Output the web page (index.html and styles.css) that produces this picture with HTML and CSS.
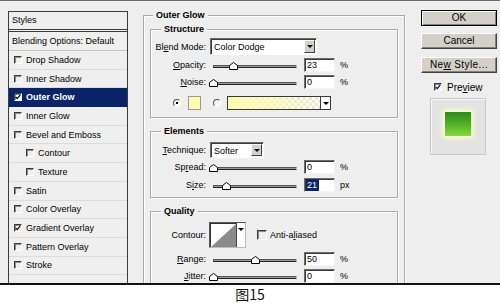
FILE: index.html
```html
<!DOCTYPE html>
<html>
<head>
<meta charset="utf-8">
<link rel="stylesheet" href="styles.css">
</head>
<body>
<div class="dialog">
  <div class="styles-panel">
    <div class="sp-head">Styles</div>
    <div class="sp-blend">Blending Options: Default</div>
    <ul class="sp-list">
      <li class="sp-item"><span class="cb"></span>Drop Shadow</li>
      <li class="sp-item"><span class="cb"></span>Inner Shadow</li>
      <li class="sp-item active"><span class="cb checked"><svg viewBox="0 0 8 8" width="6" height="6"><polyline points="1,4 3,6.2 7,1.2" fill="none" stroke="#000" stroke-width="1.6"/></svg></span>Outer Glow</li>
      <li class="sp-item"><span class="cb"></span>Inner Glow</li>
      <li class="sp-item"><span class="cb"></span>Bevel and Emboss</li>
      <li class="sp-item sub"><span class="cb"></span>Contour</li>
      <li class="sp-item sub"><span class="cb"></span>Texture</li>
      <li class="sp-item"><span class="cb"></span>Satin</li>
      <li class="sp-item"><span class="cb"></span>Color Overlay</li>
      <li class="sp-item"><span class="cb checked-plain"><svg viewBox="0 0 8 8" width="6" height="6"><polyline points="1,4 3,6.2 7,1.2" fill="none" stroke="#000" stroke-width="1.4"/></svg></span>Gradient Overlay</li>
      <li class="sp-item"><span class="cb"></span>Pattern Overlay</li>
      <li class="sp-item"><span class="cb"></span>Stroke</li>
    </ul>
  </div>

  <div class="group outer">
    <div class="group-title">Outer Glow</div>

    <div class="group structure">
      <div class="group-title">Structure</div>
      <div class="row row-blend">
        <span class="lbl">Bl<u>e</u>nd Mode:</span>
        <div class="select blend-select"><span class="sel-text">Color Dodge</span><span class="drop"><span class="tri"></span></span></div>
      </div>
      <div class="row row-opacity">
        <span class="lbl"><u>O</u>pacity:</span>
        <div class="slider"><div class="track"></div><span class="thumb" style="left:20px"><svg viewBox="0 0 9 8" width="9" height="8"><polygon points="0.5,7.5 0.5,3.5 4.5,0.5 8.5,3.5 8.5,7.5" fill="#fff" stroke="#000"/></svg></span></div>
        <div class="num">23</div><span class="unit">%</span>
      </div>
      <div class="row row-noise">
        <span class="lbl"><u>N</u>oise:</span>
        <div class="slider"><div class="track"></div><span class="thumb" style="left:0px"><svg viewBox="0 0 9 8" width="9" height="8"><polygon points="0.5,7.5 0.5,3.5 4.5,0.5 8.5,3.5 8.5,7.5" fill="#fff" stroke="#000"/></svg></span></div>
        <div class="num">0</div><span class="unit">%</span>
      </div>
      <div class="row row-color">
        <span class="radio on"></span>
        <span class="swatch"></span>
        <span class="radio radio2"></span>
        <div class="gradient"><span class="drop"><span class="tri"></span></span></div>
      </div>
    </div>

    <div class="group elements">
      <div class="group-title">Elements</div>
      <div class="row">
        <span class="lbl"><u>T</u>echnique:</span>
        <div class="select tech-select"><span class="sel-text">Softer</span><span class="drop"><span class="tri"></span></span></div>
      </div>
      <div class="row row-spread">
        <span class="lbl">Sp<u>r</u>ead:</span>
        <div class="slider"><div class="track"></div><span class="thumb" style="left:0px"><svg viewBox="0 0 9 8" width="9" height="8"><polygon points="0.5,7.5 0.5,3.5 4.5,0.5 8.5,3.5 8.5,7.5" fill="#fff" stroke="#000"/></svg></span></div>
        <div class="num">0</div><span class="unit">%</span>
      </div>
      <div class="row row-size">
        <span class="lbl">S<u>i</u>ze:</span>
        <div class="slider"><div class="track"></div><span class="thumb" style="left:13px"><svg viewBox="0 0 9 8" width="9" height="8"><polygon points="0.5,7.5 0.5,3.5 4.5,0.5 8.5,3.5 8.5,7.5" fill="#fff" stroke="#000"/></svg></span></div>
        <div class="num"><span class="sel">21</span></div><span class="unit">px</span>
      </div>
    </div>

    <div class="group quality">
      <div class="group-title">Quality</div>
      <div class="row row-contour">
        <span class="lbl">Contour:</span>
        <div class="contour">
          <svg class="curve" viewBox="0 0 24 24" width="24" height="24" preserveAspectRatio="none"><polygon points="0,24 24,0 24,24" fill="#8a8a8a"/></svg>
          <span class="cdrop"><span class="tri"></span></span>
        </div>
        <span class="cb aa"></span><span class="aa-text">Anti-a<u>l</u>iased</span>
      </div>
      <div class="row row-range">
        <span class="lbl"><u>R</u>ange:</span>
        <div class="slider"><div class="track"></div><span class="thumb" style="left:42px"><svg viewBox="0 0 9 8" width="9" height="8"><polygon points="0.5,7.5 0.5,3.5 4.5,0.5 8.5,3.5 8.5,7.5" fill="#fff" stroke="#000"/></svg></span></div>
        <div class="num">50</div><span class="unit">%</span>
      </div>
      <div class="row row-jitter">
        <span class="lbl"><u>J</u>itter:</span>
        <div class="slider"><div class="track"></div><span class="thumb" style="left:0px"><svg viewBox="0 0 9 8" width="9" height="8"><polygon points="0.5,7.5 0.5,3.5 4.5,0.5 8.5,3.5 8.5,7.5" fill="#fff" stroke="#000"/></svg></span></div>
        <div class="num">0</div><span class="unit">%</span>
      </div>
    </div>
  </div>

  <div class="actions">
    <div class="btn default">OK</div>
    <div class="btn cancel">Cancel</div>
    <div class="btn newstyle">Ne<u>w</u> Style...</div>
    <div class="preview-check"><span class="cb checked-plain"><svg viewBox="0 0 8 8" width="6" height="6"><polyline points="1,4 3,6.2 7,1.2" fill="none" stroke="#000" stroke-width="1.4"/></svg></span><span>Pre<u>v</u>iew</span></div>
    <div class="preview-box"><div class="glow-square"></div></div>
  </div>
</div>
<div class="caption">图15</div>
</body>
</html>
```
FILE: styles.css
```css
* { box-sizing: border-box; }

body {
  margin: 0;
  width: 500px;
  height: 303px;
  overflow: hidden;
  background: #fff;
  font-family: "Liberation Sans", Arial, sans-serif;
  font-size: 9px;
  color: #000;
}

u { text-decoration: underline; text-underline-offset: 1px; }

.dialog {
  display: flex;
  height: 285px;
  border-top: 1px solid #6a6a6a;
  border-bottom: 2px solid #111;
  background: #eeeeee;
  overflow: hidden;
}

/* ---- left styles list ---- */
.styles-panel {
  flex: none;
  width: 120px;
  margin: 10px 0 0 8px;
  border: 1px solid #3c3c3c;
  border-bottom: 0;
  background: #efefef;
}
.sp-head {
  height: 18px;
  line-height: 17px;
  padding-left: 3px;
  border-bottom: 1px solid #3c3c3c;
}
.sp-blend {
  margin-top: 1px;
  height: 20px;
  line-height: 18px;
  padding-left: 3px;
  border-top: 1px solid #3c3c3c;
  border-bottom: 1px solid #c4c4c4;
}
.sp-list { list-style: none; margin: 0; padding: 0; }
.sp-item {
  height: 18.7px;
  display: flex;
  align-items: center;
  gap: 4px;
  padding-left: 5px;
  border-bottom: 1px solid #dcdcdc;
  white-space: nowrap;
}
.sp-item.sub { padding-left: 17px; }
.sp-item.active {
  background: #0a246a;
  color: #fff;
  font-weight: bold;
  border-bottom-color: #0a246a;
}

.cb {
  flex: none;
  width: 8px;
  height: 8px;
  display: inline-flex;
  align-items: center;
  justify-content: center;
  border-top: 1px solid #3a3a3a;
  border-left: 1px solid #3a3a3a;
  border-right: 1px solid #fff;
  border-bottom: 1px solid #fff;
  box-shadow: inset 1px 1px 0 #8a8a8a;
}
.cb.checked { background: #fff; }
.cb.checked-plain { background: #f4f4f4; }

/* ---- middle groups ---- */
.group {
  position: relative;
  border: 1px solid #a9a9a9;
  box-shadow: inset 1px 1px 0 #fff, 1px 1px 0 #fff;
}
.group-title {
  position: absolute;
  top: -7px;
  left: 9px;
  padding: 0 3px;
  line-height: 12px;
  font-weight: bold;
  background: #eeeeee;
  white-space: nowrap;
}
.outer {
  flex: none;
  width: 262px;
  margin: 14px 0 0 15px;
  padding: 13px 6px 0;
  border-bottom: 0;
}
.structure .group-title,
.elements .group-title,
.quality .group-title { left: 10px; }

.structure { height: 89px; padding-top: 8px; }
.elements { height: 67px; margin-top: 13px; padding-top: 10px; }
.quality { height: 100px; margin-top: 13px; padding-top: 10px; }

.row {
  display: flex;
  align-items: center;
  height: 16px;
  white-space: nowrap;
}
.lbl {
  flex: none;
  width: 55px;
  text-align: right;
}
.row-blend { height: 17px; }
.row-opacity { margin-top: 2px; }
.row-noise { margin-top: 1px; }
.row-color { margin-top: 6px; height: 14px; }
.row-spread { margin-top: 1px; }
.row-size { margin-top: 2px; }
.row-contour { height: 26px; }
.row-range { margin-top: 3px; }
.row-jitter { margin-top: 1px; }

.select {
  flex: none;
  display: flex;
  align-items: stretch;
  margin-left: 4px;
  background: #fff;
  border-top: 1px solid #6b6b6b;
  border-left: 1px solid #6b6b6b;
  border-right: 1px solid #fff;
  border-bottom: 1px solid #fff;
  box-shadow: inset 1px 1px 0 #3a3a3a;
}
.blend-select { width: 107px; height: 17px; }
.tech-select { width: 54px; height: 16px; }
.sel-text {
  flex: 1;
  padding: 2px 0 0 3px;
  line-height: 12px;
}
.drop {
  flex: none;
  width: 11px;
  margin: 1px 1px 1px 0;
  display: flex;
  justify-content: center;
  align-items: center;
  background: #d4d0c8;
  border-top: 1px solid #fff;
  border-left: 1px solid #fff;
  border-right: 1px solid #404040;
  border-bottom: 1px solid #404040;
}
.tri {
  width: 0;
  height: 0;
  border-left: 3px solid transparent;
  border-right: 3px solid transparent;
  border-top: 3px solid #000;
}

.slider {
  position: relative;
  flex: none;
  width: 91px;
  height: 16px;
  margin-left: 3px;
  padding: 0 3px 0 4px;
}
.track {
  margin-top: 8px;
  height: 3px;
  border-top: 1px solid #555;
  border-bottom: 1px solid #222;
  border-left: 1px solid #555;
  border-right: 1px solid #ddd;
  background: #9a9a9a;
}
.thumb {
  position: absolute;
  top: 5px;
  width: 9px;
  height: 8px;
  display: block;
}
.thumb svg { display: block; }

.num {
  flex: none;
  width: 31px;
  height: 14px;
  margin-left: 4px;
  padding-left: 2px;
  line-height: 12px;
  background: #fff;
  border-top: 1px solid #6b6b6b;
  border-left: 1px solid #6b6b6b;
  border-right: 1px solid #f4f4f4;
  border-bottom: 1px solid #f4f4f4;
  box-shadow: inset 1px 1px 0 #3a3a3a;
}
.num .sel {
  display: inline-block;
  padding: 0 2px 0 1px;
  margin-left: -1px;
  background: #0a246a;
  color: #fff;
}
.unit { margin-left: 5px; }

.radio {
  flex: none;
  width: 8px;
  height: 8px;
  margin-left: 22px;
  border-radius: 50%;
  border: 1px solid;
  border-color: #555 #fff #fff #555;
  background: #f6f6f6;
  position: relative;
}
.radio.on::after {
  content: "";
  position: absolute;
  left: 2px;
  top: 2px;
  width: 2px;
  height: 2px;
  background: #000;
}
.radio2 { margin-left: 12px; }
.swatch {
  flex: none;
  width: 13px;
  height: 14px;
  margin-left: 7px;
  background: #fffcb2;
  border: 1px solid #9a9a9a;
}
.gradient {
  flex: none;
  width: 104px;
  height: 14px;
  margin-left: 6px;
  display: flex;
  justify-content: flex-end;
  border: 1px solid #3a3a3a;
  background:
    linear-gradient(to right, #fffbae 0%, rgba(255, 251, 174, 0.55) 55%, rgba(255, 251, 174, 0) 100%),
    repeating-conic-gradient(#e2e2e2 0 25%, #ffffff 0 50%) 0 0 / 6px 6px;
}
.gradient .drop {
  margin: 0;
  width: 10px;
  background: #fff;
  border: 0;
  border-left: 1px solid #3a3a3a;
}

.contour {
  flex: none;
  display: flex;
  width: 37px;
  height: 26px;
  margin-left: 3px;
  background: #fff;
  border-top: 1px solid #555;
  border-left: 1px solid #555;
  border-right: 1px solid #bbb;
  border-bottom: 1px solid #bbb;
  box-shadow: inset 1px 1px 0 #333;
}
.curve {
  display: block;
  width: 25px;
  height: 23px;
  margin: 1px 0 0 1px;
}
.cdrop {
  flex: none;
  width: 9px;
  display: flex;
  justify-content: center;
  padding-top: 5px;
  border-left: 1px solid #444;
  background: #fff;
}
.cdrop .tri { border-top-width: 3px; }
.cb.aa {
  width: 10px;
  height: 10px;
  margin-left: 11px;
}
.aa-text { margin-left: 3px; }

/* ---- right buttons ---- */
.actions {
  flex: none;
  width: 76px;
  margin: 9px 0 0 16px;
  display: flex;
  flex-direction: column;
  font-size: 10px;
}
.btn {
  height: 16px;
  line-height: 14px;
  text-align: center;
  background: #d4d0c8;
  border: 1px solid;
  border-color: #fff #404040 #404040 #fff;
  box-shadow: inset -1px -1px 0 #808080;
  white-space: nowrap;
}
.btn.default {
  border-color: #000;
  box-shadow: inset 1px 1px 0 #fff, inset -1px -1px 0 #808080;
}
.cancel { margin-top: 7px; }
.newstyle { margin-top: 8px; letter-spacing: 0.4px; }

.preview-check {
  display: flex;
  align-items: center;
  height: 12px;
  margin-top: 8px;
  padding-left: 13px;
  gap: 5px;
}
.preview-box {
  width: 56px;
  height: 57px;
  margin: 5px 0 0 9px;
  padding-top: 13px;
  display: flex;
  justify-content: center;
  align-items: flex-start;
  background: #e3e3e3;
  border: 1px solid #c9c9c9;
  box-shadow: inset 1px 1px 0 #f6f6f6;
}
.glow-square {
  width: 26px;
  height: 24px;
  background: linear-gradient(to bottom, #2f8a1d 0%, #55b42a 55%, #86d93c 100%);
  box-shadow: 0 0 2px 1px #fbffd6, 0 0 5px 3px rgba(250, 255, 200, 0.7);
}

.caption {
  height: 18px;
  line-height: 18px;
  text-align: center;
  font-family: "Noto Sans CJK SC", "Noto Sans", sans-serif;
  font-size: 14px;
  color: #111;
}
```
